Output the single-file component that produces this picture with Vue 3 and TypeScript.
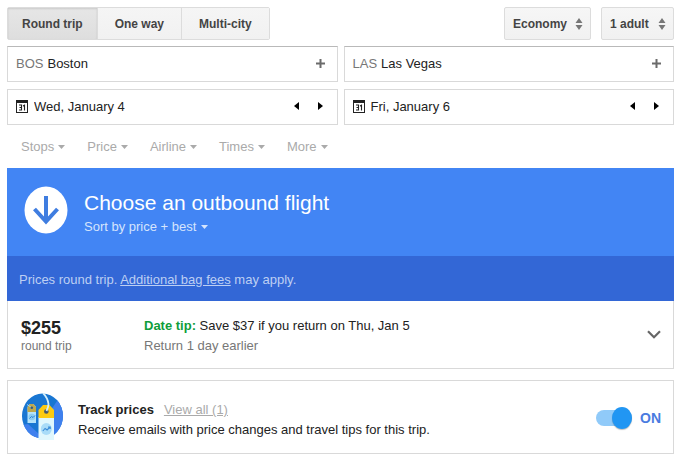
<script setup lang="ts">
import { ref } from 'vue'

interface Leg {
  id: string
  placeLabel: string
  code: string
  city: string
  dateLabel: string
  days: string[]
  index: number
}

const tripTypes: string[] = ['Round trip', 'One way', 'Multi-city']
const tripType = ref<string>('Round trip')
const cabin = ref<string>('Economy')
const travellers = ref<string>('1 adult')
const tracking = ref<boolean>(true)
const filters: string[] = ['Stops', 'Price', 'Airline', 'Times', 'More']

const legs = ref<Leg[]>([
  {
    id: 'from',
    placeLabel: 'Origin',
    code: 'BOS',
    city: 'Boston',
    dateLabel: 'Departure date',
    days: ['Tue, January 3', 'Wed, January 4', 'Thu, January 5'],
    index: 1,
  },
  {
    id: 'to',
    placeLabel: 'Destination',
    code: 'LAS',
    city: 'Las Vegas',
    dateLabel: 'Return date',
    days: ['Thu, January 5', 'Fri, January 6', 'Sat, January 7'],
    index: 1,
  },
])

function shift(leg: Leg, step: number): void {
  leg.index = Math.min(leg.days.length - 1, Math.max(0, leg.index + step))
}
</script>

<template>
  <main class="page">
    <header class="toolbar">
      <div class="segments" role="group" aria-label="Trip type">
        <button
          v-for="type in tripTypes"
          :key="type"
          type="button"
          class="segment"
          :class="{ active: type === tripType }"
          :aria-pressed="type === tripType"
          @click="tripType = type"
        >{{ type }}</button>
      </div>
      <div class="selects">
        <div class="select-box cabin">
          <select v-model="cabin" aria-label="Cabin class">
            <option>Economy</option>
            <option>Business</option>
          </select>
          <svg class="sorter" width="8" height="12" viewBox="0 0 8 12" aria-hidden="true">
            <path d="M4 0L7.5 5H.5zM4 12L.5 7h7z" fill="#777" />
          </svg>
        </div>
        <div class="select-box people">
          <select v-model="travellers" aria-label="Travellers">
            <option>1 adult</option>
            <option>2 adults</option>
          </select>
          <svg class="sorter" width="8" height="12" viewBox="0 0 8 12" aria-hidden="true">
            <path d="M4 0L7.5 5H.5zM4 12L.5 7h7z" fill="#777" />
          </svg>
        </div>
      </div>
    </header>

    <section class="legs">
      <div v-for="leg in legs" :key="leg.id" class="leg">
        <div class="field place">
          <label :for="leg.id + '-city'" class="code">{{ leg.code }}</label>
          <input :id="leg.id + '-city'" v-model="leg.city" type="text" />
          <button type="button" class="icon-button" :aria-label="'Add ' + leg.placeLabel">
            <svg width="9" height="9" viewBox="0 0 9 9"><path d="M4.5 0v9M0 4.5h9" stroke="#6b6b6b" stroke-width="2" /></svg>
          </button>
        </div>
        <div class="field date">
          <label :for="leg.id + '-date'" class="calendar" :aria-label="leg.dateLabel">
            <svg width="12" height="13" viewBox="0 0 12 13">
              <path d="M0 0h12v13H0z" fill="#222" />
              <path d="M1 3h10v9H1z" fill="#fff" />
              <path d="M3 5h2.500v5H3M3.500 7.500h2M7 6l1.500-.8V10.500" fill="none" stroke="#222" stroke-width="1.100" />
            </svg>
          </label>
          <input :id="leg.id + '-date'" :value="leg.days[leg.index]" type="text" readonly />
          <button type="button" class="icon-button" aria-label="Previous day" @click="shift(leg, -1)">
            <svg width="5" height="8" viewBox="0 0 5 8"><path d="M5 0v8L0 4z" fill="#000" /></svg>
          </button>
          <button type="button" class="icon-button" aria-label="Next day" @click="shift(leg, 1)">
            <svg width="5" height="8" viewBox="0 0 5 8"><path d="M0 0v8l5-4z" fill="#000" /></svg>
          </button>
        </div>
      </div>
    </section>

    <nav class="filters" aria-label="Filters">
      <button v-for="filter in filters" :key="filter" type="button" class="filter">
        {{ filter }}
        <svg width="7" height="4" viewBox="0 0 7 4" aria-hidden="true"><path d="M0 0h7L3.5 4z" fill="currentColor" /></svg>
      </button>
    </nav>

    <section class="results">
      <div class="banner">
        <svg class="badge" width="44" height="48" viewBox="0 0 44 48" aria-hidden="true">
          <ellipse cx="22" cy="24" rx="21.500" ry="23.500" fill="#fff" />
          <path d="M22 10v25M10.500 23L22 35.500 33.500 23" fill="none" stroke="#3f7de0" stroke-width="4" />
        </svg>
        <div>
          <h1>Choose an outbound flight</h1>
          <button type="button" class="sort">
            Sort by price + best
            <svg width="7" height="4" viewBox="0 0 7 4" aria-hidden="true"><path d="M0 0h7L3.500 4z" fill="currentColor" /></svg>
          </button>
        </div>
      </div>
      <p class="notice">Prices round trip. <a href="#fees">Additional bag fees</a> may apply.</p>
      <div class="tip">
        <div class="price">
          <strong>$255</strong>
          <span>round trip</span>
        </div>
        <div class="advice">
          <p><b>Date tip:</b> Save $37 if you return on Thu, Jan 5</p>
          <p class="muted">Return 1 day earlier</p>
        </div>
        <button type="button" class="icon-button expand" aria-label="Show details">
          <svg width="14" height="9" viewBox="0 0 14 9"><path d="M1 1.300l6 6 6-6" fill="none" stroke="#666" stroke-width="2.200" /></svg>
        </button>
      </div>
    </section>

    <section class="track">
      <svg class="tags" width="42" height="48" viewBox="0 0 42 48" aria-hidden="true">
        <defs>
          <clipPath id="disc"><ellipse cx="20.500" cy="23" rx="20.500" ry="22.500" /></clipPath>
        </defs>
        <g clip-path="url(#disc)">
          <path d="M0 0h42v48H0z" fill="#1976d2" />
          <path d="M31 14l6-9 5 3v40H17V32z" fill="#3f80ee" />
          <path d="M6 31l11 10v7H0V32z" fill="#3f80ee" />
        </g>
        <path d="M5.500 14l2-3h4l2.500 3v16H5.500z" fill="#b5e3fa" />
        <path d="M5.500 19v-5l2-3h4l2.500 3v5z" fill="#bda84f" />
        <path d="M5 11.500l4.500 3" stroke="#9bd4f2" stroke-width="1" />
        <circle cx="9.800" cy="14.800" r="1.300" fill="#315b86" />
        <circle cx="9.800" cy="24" r="3.300" fill="#8acdf4" />
        <path d="M7.500 25.500l2-2 1.500 1 2-2" fill="none" stroke="#2f83d5" />
        <path d="M16.500 24v23H32V24z" fill="#e0f7fd" />
        <path d="M16.500 25v-8l4.500-5h6.500l4.500 5v8z" fill="#fdcb13" />
        <circle cx="24.300" cy="18.500" r="2.300" fill="#43566d" />
        <path d="M21 0c3 3 5 7 5.500 11 0 3-1 5-2 7" fill="none" stroke="#d3effa" stroke-width="1.800" />
        <ellipse cx="24.300" cy="36" rx="5.500" ry="6" fill="#a9dcf8" />
        <path d="M20.800 38l2.300-2.500 2 1.500 3-3M26 34h2.200v2" fill="none" stroke="#398bd8" stroke-width="1.100" />
      </svg>
      <div class="track-text">
        <p><b>Track prices</b><a href="#tracked">View all (1)</a></p>
        <p>Receive emails with price changes and travel tips for this trip.</p>
      </div>
      <label class="switch">
        <input v-model="tracking" type="checkbox" role="switch" aria-label="Track prices" />
        <span>{{ tracking ? 'ON' : 'OFF' }}</span>
      </label>
    </section>
  </main>
</template>

<style>
body {
  margin: 0;
  background: #fff;
}
</style>

<style scoped>
* {
  box-sizing: border-box;
}
.page {
  padding: 7px 16px 6px 7px;
  font-family: "Liberation Sans", Arial, sans-serif;
  font-size: 13px;
  line-height: 20px;
  color: #222;
}
button,
input,
select {
  font: inherit;
  color: inherit;
  margin: 0;
  padding: 0;
  border: 0;
  background: none;
}
button {
  cursor: pointer;
}
p,
h1 {
  margin: 0;
}
svg {
  display: block;
  flex: none;
}
.toolbar {
  display: flex;
  justify-content: space-between;
  margin-bottom: 6px;
  font-size: 12px;
  font-weight: bold;
  color: #444;
}
.segments {
  display: flex;
  border: 1px solid #dcdcdc;
  border-radius: 2px;
}
.segment {
  height: 31px;
  padding: 0 14px;
  background: linear-gradient(#f5f5f5, #f1f1f1);
}
.segment:not(:first-child) {
  padding: 0 17px;
}
.segment + .segment {
  border-left: 1px solid #dcdcdc;
}
.segment.active {
  background: linear-gradient(#e6e6e6, #dedede);
  box-shadow: inset 0 1px 2px rgba(0, 0, 0, 0.12);
}
.selects {
  display: flex;
  gap: 10px;
}
.select-box {
  display: grid;
  align-items: center;
  border: 1px solid #dcdcdc;
  border-radius: 2px;
  background: linear-gradient(#f6f6f6, #f1f1f1);
}
.select-box > * {
  grid-area: 1 / 1;
}
.select-box select {
  height: 31px;
  width: 100%;
  padding: 0 16px 0 8px;
  appearance: none;
}
.cabin {
  width: 87px;
}
.people {
  width: 73px;
}
.sorter {
  justify-self: end;
  margin-right: 7px;
  pointer-events: none;
}
.legs {
  display: flex;
  gap: 6px;
}
.leg {
  flex: 1;
  min-width: 0;
  display: flex;
  flex-direction: column;
  gap: 7px;
}
.field {
  display: flex;
  align-items: center;
  height: 36px;
  padding: 0 12px 2px 8px;
  border: 1px solid #d9d9d9;
}
.place {
  border-top-color: #b9b9b9;
}
.field input {
  flex: 1;
  min-width: 0;
  padding-top: 2px;
}
.code {
  margin-right: 4px;
  padding-top: 2px;
  color: #777;
}
.calendar {
  margin-right: 6px;
}
.date {
  padding-right: 14px;
}
.icon-button + .icon-button {
  margin-left: 19px;
}
.filters {
  display: flex;
  gap: 22px;
  padding: 12px 14px 11px;
}
.filter,
.sort {
  display: flex;
  align-items: center;
  gap: 4px;
}
.filter {
  color: #aaa;
}
.banner {
  display: flex;
  gap: 16px;
  height: 88px;
  padding: 18px 17px;
  background: #4285f4;
  color: #fff;
}
h1 {
  padding: 4px 0 1px;
  font-size: 21px;
  line-height: 26px;
  font-weight: normal;
}
.sort {
  gap: 5px;
  color: #d5e4fd;
}
.notice {
  padding: 14px 12px 11px;
  background: #3367d6;
  color: #bdcff3;
}
.notice a {
  color: inherit;
}
.tip {
  display: flex;
  align-items: center;
  height: 68px;
  padding: 0 12px 0 13px;
  border: 1px solid #d9d9d9;
  border-top: 0;
}
.price {
  display: flex;
  flex-direction: column;
  width: 123px;
  padding-top: 2px;
  font-size: 12px;
  line-height: 16px;
  color: #777;
}
.price strong {
  font-size: 18px;
  line-height: 20px;
  color: #222;
}
.advice {
  flex: 1;
  padding-top: 2px;
}
.advice b {
  color: #0f9d3a;
}
.muted {
  color: #777;
}
.track {
  display: flex;
  align-items: center;
  margin-top: 11px;
  height: 74px;
  padding: 0 12px 0 14px;
  border: 1px solid #d9d9d9;
}
.track-text {
  flex: 1;
  padding: 5px 0 0 14px;
}
.track-text a {
  margin-left: 10px;
  color: #aaa;
}
.switch {
  display: flex;
  align-items: center;
  gap: 8px;
  padding-top: 2px;
  font-size: 14px;
  font-weight: bold;
  color: #4a7be0;
}
.switch input {
  display: flex;
  align-items: center;
  width: 36px;
  height: 16px;
  border-radius: 8px;
  background: #ccc;
  appearance: none;
}
.switch input::before {
  content: "";
  flex: none;
  width: 20px;
  height: 22px;
  border-radius: 50%;
  background: #999;
  box-shadow: 0 1px 1px rgba(0, 0, 0, 0.25);
}
.switch input:checked {
  justify-content: flex-end;
  background: #90caf9;
}
.switch input:checked::before {
  background: #2196f3;
}
</style>
